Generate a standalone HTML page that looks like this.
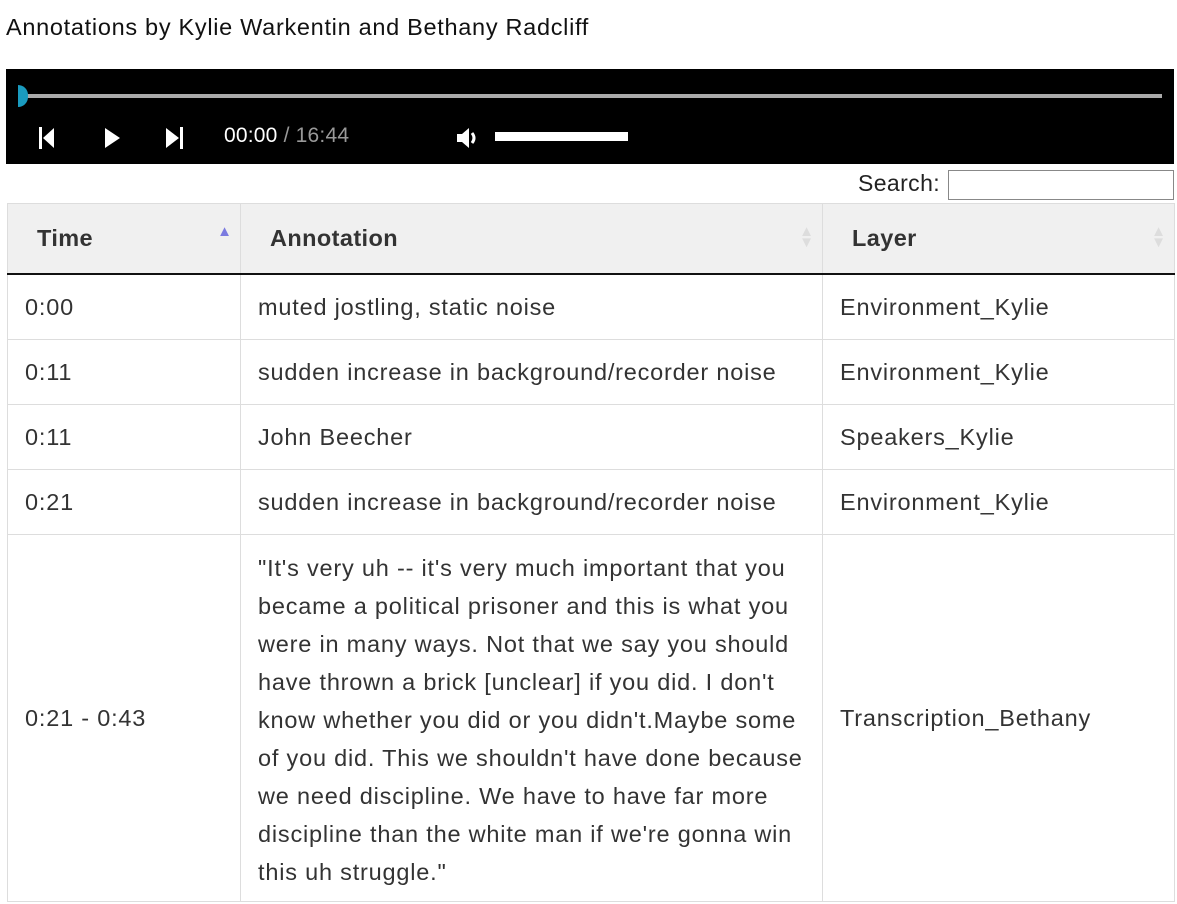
<!DOCTYPE html>
<html><head><meta charset="utf-8"><style>
body{margin:0;background:#fff;font-family:"Liberation Sans",sans-serif;color:#333;}
.title{position:absolute;left:6px;top:14px;font-size:23.5px;color:#111;letter-spacing:0.7px;}
.player{position:absolute;left:6px;top:69px;width:1168px;height:95px;background:#000;}
.bar{position:absolute;left:14px;top:25px;width:1142px;height:4px;background:#aaa;}
.knob{position:absolute;left:12px;top:16px;width:10px;height:22px;background:#1a9bbf;border-radius:0 11px 11px 0;}
.time{position:absolute;left:218px;top:55px;font-size:21px;color:#fff;letter-spacing:0.2px;}
.time span{color:#999;}
.vol{position:absolute;left:489px;top:63px;width:133px;height:9px;background:#fff;}
.search{position:absolute;left:858px;top:170px;font-size:23px;color:#222;letter-spacing:0.4px;}
.search input{position:absolute;left:90px;top:0px;width:226px;height:30px;border:1px solid #888;box-sizing:border-box;}
table{position:absolute;left:7px;top:203px;width:1168px;border-collapse:collapse;font-size:23.5px;letter-spacing:0.8px;}
th{background:#f0f0f0;height:69px;text-align:left;font-weight:bold;padding:0 0 0 29px;border:1px solid #ddd;border-bottom:2px solid #111;position:relative;letter-spacing:0.4px;}
td{border:1px solid #ddd;padding:0 17px;height:64px;white-space:nowrap;}
td.l{line-height:38px;padding:14px 17px 10px;}
.s{position:absolute;right:8px;top:22px;font-size:15px;line-height:11px;color:#ddd;letter-spacing:0;}
</style></head><body>
<div class="title">Annotations by Kylie Warkentin and Bethany Radcliff</div>
<div class="player">
<div class="bar"></div><div class="knob"></div>
<svg style="position:absolute;left:30px;top:56px" width="160" height="26">
<rect x="3" y="2" width="3" height="22" fill="#fff"/><path d="M7 13 L18 3 L18 23 Z" fill="#fff"/>
<path d="M69 3 L84 13 L69 23 Z" fill="#fff"/>
<path d="M130 3 L143 13 L130 23 Z" fill="#fff"/><rect x="144" y="2" width="3" height="22" fill="#fff"/>
</svg>
<div class="time">00:00 <span>/ 16:44</span></div>
<svg style="position:absolute;left:449px;top:56px" width="28" height="26"><path d="M2 9 H7 L14 3 V23 L7 17 H2 Z" fill="#fff"/><path d="M17 8 Q21 13 17 18" stroke="#fff" stroke-width="3" fill="none"/></svg>
<div class="vol"></div>
</div>
<div class="search">Search:<input></div>
<table>
<tr><th style="width:203px">Time<span class="s" style="color:#7b7be0">▲</span></th><th style="width:552px">Annotation<span class="s">▲<br>▼</span></th><th>Layer<span class="s">▲<br>▼</span></th></tr>
<tr><td>0:00</td><td>muted jostling, static noise</td><td>Environment_Kylie</td></tr>
<tr><td>0:11</td><td>sudden increase in background/recorder noise</td><td>Environment_Kylie</td></tr>
<tr><td>0:11</td><td>John Beecher</td><td>Speakers_Kylie</td></tr>
<tr><td>0:21</td><td>sudden increase in background/recorder noise</td><td>Environment_Kylie</td></tr>
<tr><td>0:21 - 0:43</td><td class="l">"It's very uh -- it's very much important that you<br>became a political prisoner and this is what you<br>were in many ways. Not that we say you should<br>have thrown a brick [unclear] if you did. I don't<br>know whether you did or you didn't.Maybe some<br>of you did. This we shouldn't have done because<br>we need discipline. We have to have far more<br>discipline than the white man if we're gonna win<br>this uh struggle."</td><td>Transcription_Bethany</td></tr>
</table>
</body></html>
